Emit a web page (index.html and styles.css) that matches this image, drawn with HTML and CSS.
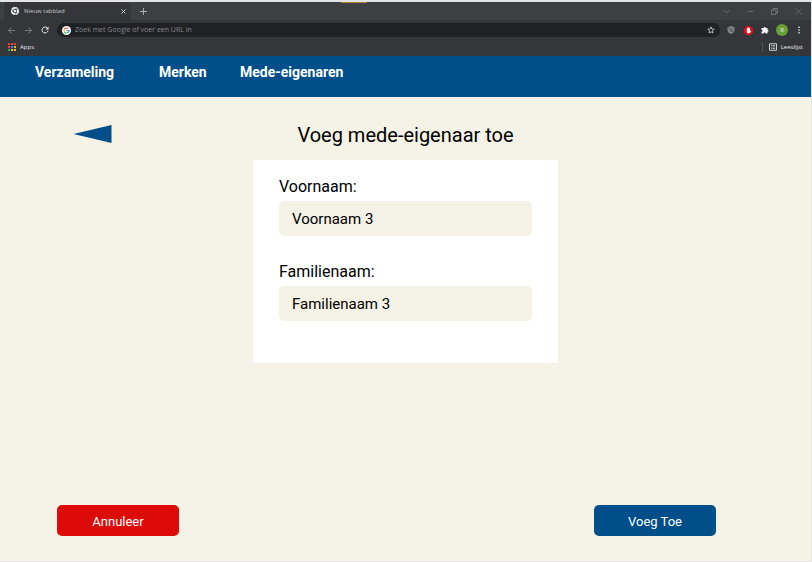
FILE: index.html
```html
<!DOCTYPE html>
<html lang="nl">
<head>
<meta charset="utf-8">
<meta name="viewport" content="width=device-width, initial-scale=1">
<title>Voeg mede-eigenaar toe</title>
<link rel="stylesheet" href="styles.css">
</head>
<body>
<div class="browser">
  <div class="tabs">
    <div class="tab">
      <svg class="tab-icon" viewBox="0 0 16 16" aria-hidden="true"><circle cx="8" cy="8" r="8" fill="#e8eaed"/><circle cx="8" cy="8" r="4.2" fill="#35363a"/><circle cx="8" cy="8" r="2.6" fill="#e8eaed"/><path d="M8 4h7M4.500 10 1.200 4.500M11.500 10 8 15.500" stroke="#35363a" stroke-width="1.300"/></svg>
      <span class="tab-title">Nieuw tabblad</span>
      <button class="icon-button" aria-label="Tabblad sluiten"><svg class="glyph-small" viewBox="0 0 10 10"><path d="M1 1l8 8M9 1L1 9" stroke="#dfe1e5" stroke-width="1.800"/></svg></button>
    </div>
    <button class="icon-button new-tab" aria-label="Nieuw tabblad openen"><svg class="glyph" viewBox="0 0 14 14"><path d="M7 0v14M0 7h14" stroke="#b4b7ba" stroke-width="1.800"/></svg></button>
    <div class="window-controls">
      <button class="icon-button" aria-label="Tabbladen zoeken"><svg class="glyph" viewBox="0 0 12 12"><path d="M1 3.500l5 5 5-5" fill="none" stroke="#74777a" stroke-width="1.300"/></svg></button>
      <button class="icon-button" aria-label="Minimaliseren"><svg class="glyph" viewBox="0 0 12 12"><path d="M1 6h10" stroke="#74777a" stroke-width="1.300"/></svg></button>
      <button class="icon-button" aria-label="Verkleinen"><svg class="glyph" viewBox="0 0 12 12"><path d="M1 3.500h7.500V11H1zM3.500 3.500V1H11v7.500H8.500" fill="none" stroke="#85888b" stroke-width="1.300"/></svg></button>
      <button class="icon-button" aria-label="Sluiten"><svg class="glyph" viewBox="0 0 12 12"><path d="M1 1l10 10M11 1L1 11" stroke="#74777a" stroke-width="1.300"/></svg></button>
    </div>
  </div>
  <div class="toolbar">
    <div class="history">
      <button class="icon-button" aria-label="Vorige"><svg class="glyph" viewBox="0 0 14 14"><path d="M14 7H1M7 1L1 7l6 6" fill="none" stroke="#8b8e91" stroke-width="1.600"/></svg></button>
      <button class="icon-button" aria-label="Volgende"><svg class="glyph" viewBox="0 0 14 14"><path d="M0 7h13M7 1l6 6-6 6" fill="none" stroke="#8b8e91" stroke-width="1.600"/></svg></button>
      <button class="icon-button" aria-label="Vernieuwen"><svg class="glyph-large" viewBox="0 0 16 16"><path d="M13 4.500A6 6 0 1 0 14 9" fill="none" stroke="#e8eaed" stroke-width="2"/><path d="M15 1v6H9z" fill="#e8eaed"/></svg></button>
    </div>
    <div class="omnibox">
      <svg class="google" viewBox="0 0 18 18" aria-hidden="true"><circle cx="9" cy="9" r="9" fill="#fff"/><path d="M12.500 5.200A5 5 0 0 0 4.700 6.500" fill="none" stroke="#ea4335" stroke-width="2.200"/><path d="M4.700 6.500a5 5 0 0 0 0 5" fill="none" stroke="#fbbc05" stroke-width="2.200"/><path d="M4.700 11.500a5 5 0 0 0 7.600 1.200" fill="none" stroke="#34a853" stroke-width="2.200"/><path d="M12.300 12.700A5 5 0 0 0 14 9H9" fill="none" stroke="#4285f4" stroke-width="2.200"/></svg>
      <input class="omnibox-input" type="text" aria-label="Adresbalk" placeholder="Zoek met Google of voer een URL in">
      <button class="icon-button" aria-label="Bladwijzer toevoegen"><svg class="glyph-large" viewBox="0 0 16 16"><path d="M8 1.800l1.800 4.300 4.700.4-3.600 3 1.100 4.600L8 11.600l-4 2.500 1.100-4.600-3.600-3 4.700-.4z" fill="none" stroke="#dfe1e5" stroke-width="1.500"/></svg></button>
    </div>
    <div class="extensions">
      <button class="icon-button" aria-label="Privacyschild"><svg class="glyph-large" viewBox="0 0 16 16"><path d="M8 0l7 2.500V8c0 4-3 6.500-7 8-4-1.500-7-4-7-8V2.500z" fill="#85888b"/><path d="M2 3l12 10M5 8.500c1 3 5 3 6 0M7 4l5 3" fill="none" stroke="#484a4e" stroke-width="1.400"/></svg></button>
      <button class="icon-button" aria-label="Advertentieblokkering"><svg class="blocker" viewBox="0 0 16 16"><path d="M4.700 0h6.600L16 4.700v6.600L11.300 16H4.700L0 11.300V4.700z" fill="#e60b12"/><path d="M5 8V4.500h1.200V3h1.500v-.800h1.500V3.500h1.300v6l1.200-1.500 1 .8-2.500 4H6.500L5 10.800z" fill="#fff"/></svg></button>
      <button class="icon-button" aria-label="Extensies"><svg class="glyph-large" viewBox="0 0 16 16"><path d="M1 4h4.500a2 2 0 1 1 4 0H13v3.500a2 2 0 1 1 0 4V15H9.500a2 2 0 0 0-4 0H1v-3.500a2 2 0 0 0 0-4z" fill="#f1f3f4"/></svg></button>
      <button class="icon-button avatar" aria-label="Profiel">R</button>
      <button class="icon-button" aria-label="Menu"><svg class="glyph-large" viewBox="0 0 16 16"><g fill="#e8eaed"><circle cx="8" cy="2.500" r="1.700"/><circle cx="8" cy="8" r="1.700"/><circle cx="8" cy="13.500" r="1.700"/></g></svg></button>
    </div>
  </div>
  <div class="bookmarks">
    <a class="bookmark" href="#"><svg class="glyph-large" viewBox="0 0 16 16" aria-hidden="true"><path d="M0 0h4v4H0zM6 0h4v4H6zM12 0h4v4h-4zM0 6h4v4H0z" fill="#ea4335"/><path d="M6 6h4v4H6z" fill="#4285f4"/><path d="M12 6h4v4h-4zM12 12h4v4h-4zM6 12h4v4H6z" fill="#fbbc05"/><path d="M0 12h4v4H0z" fill="#34a853"/></svg><span>Apps</span></a>
    <a class="bookmark reading-list" href="#"><svg class="glyph-large" viewBox="0 0 16 16" aria-hidden="true"><path d="M1 1.500h14v13H1z" fill="none" stroke="#dfe1e5" stroke-width="1.800"/><path d="M4 5h2M7.500 5H12M4 8h2M7.500 8H12M4 11h2M7.500 11H12" stroke="#dfe1e5" stroke-width="1.500"/></svg><span>Leeslijst</span></a>
  </div>
</div>
<nav class="nav" aria-label="Hoofdmenu">
  <a href="#">Verzameling</a>
  <a href="#">Merken</a>
  <a href="#">Mede-eigenaren</a>
</nav>
<main class="page">
  <header class="page-header">
    <a class="back" href="#" aria-label="Terug"><svg class="back-arrow" viewBox="0 0 38 18"><path d="M0 9L38 0v18z" fill="#004f8a"/></svg></a>
    <h1>Voeg mede-eigenaar toe</h1>
  </header>
  <form class="form">
    <div class="card">
      <div class="field">
        <label for="voornaam">Voornaam:</label>
        <input id="voornaam" type="text" value="Voornaam 3">
      </div>
      <div class="field">
        <label for="familienaam">Familienaam:</label>
        <input id="familienaam" type="text" value="Familienaam 3">
      </div>
    </div>
    <div class="actions">
      <button class="button cancel" type="button">Annuleer</button>
      <button class="button submit" type="submit">Voeg Toe</button>
    </div>
  </form>
</main>
</body>
</html>
```
FILE: styles.css
```css
* {
  box-sizing: border-box;
}

body {
  display: flex;
  flex-direction: column;
  min-height: 100vh;
  margin: 0;
  border: solid #e4e4e4;
  border-width: 2px 1px 1px 0;
  background: #f5f3e6;
  color: #000;
  font-family: Roboto, "Liberation Sans", sans-serif;
}

a {
  color: inherit;
  text-decoration: none;
}

button,
input {
  border: 0;
  font: inherit;
}

svg {
  display: block;
}

.browser {
  position: relative;
  background: #35363a;
  color: #e8eaed;
  font-family: "Open Sans", "Noto Sans", sans-serif;
  font-size: 6px;
  line-height: 10px;
}

/* Accent mark over the top edge of the window */
.browser::before {
  content: "";
  position: absolute;
  top: 0;
  left: 42%;
  width: 26px;
  height: 1px;
  background: #a88432;
}

.icon-button {
  display: flex;
  align-items: center;
  justify-content: center;
  width: 10px;
  height: 10px;
  padding: 0;
  background: none;
  color: inherit;
}

.glyph-small {
  width: 5px;
  height: 5px;
}

.glyph {
  width: 7px;
  height: 7px;
}

.glyph-large {
  width: 8px;
  height: 8px;
}

.blocker {
  width: 9px;
  height: 9px;
}

.tabs {
  display: flex;
  align-items: center;
  height: 18px;
  padding-left: 4px;
  background: #3c4043;
}

.tab {
  display: flex;
  align-items: center;
  gap: 5px;
  width: 127px;
  height: 18px;
  padding: 0 3px 0 7px;
  border-radius: 4px 4px 0 0;
  background: #35363a;
}

.tab-icon {
  width: 8px;
  height: 8px;
}

.tab-title {
  flex: 1;
  color: #c4c7ca;
}

.new-tab {
  margin-left: 7px;
}

.window-controls {
  display: flex;
  gap: 14px;
  margin-left: auto;
  padding-right: 8px;
}

.toolbar {
  display: flex;
  align-items: center;
  gap: 5px;
  height: 20px;
  padding: 0 6px;
}

.history {
  display: flex;
  gap: 7px;
  padding-right: 2px;
}

.omnibox {
  display: flex;
  flex: 1;
  align-items: center;
  gap: 4px;
  height: 14px;
  padding: 0 4px 0 5px;
  border-radius: 7px;
  background: #202124;
}

.google {
  width: 9px;
  height: 9px;
}

.omnibox-input {
  flex: 1;
  min-width: 0;
  padding: 0;
  background: none;
  color: #e8eaed;
  font-size: 7px;
}

.omnibox-input::placeholder {
  color: #85888b;
  opacity: 1;
}

.extensions {
  display: flex;
  align-items: center;
  gap: 5px;
}

.extensions .icon-button {
  width: 12px;
  height: 12px;
}

.avatar {
  border-radius: 50%;
  background: #689f38;
}

.bookmarks {
  display: flex;
  align-items: center;
  justify-content: space-between;
  height: 16px;
  padding: 0 8px 2px;
}

.bookmark {
  display: flex;
  align-items: center;
  gap: 4px;
}

.reading-list {
  padding-left: 6px;
  border-left: 1px solid #505256;
}

.nav {
  display: grid;
  grid-template-columns: 124px 81px auto;
  height: 41px;
  padding: 7px 35px;
  background: #004f8a;
  color: #fff;
  font-size: 14px;
  font-weight: 700;
  line-height: 18px;
}

.page {
  display: flex;
  flex: 1;
  flex-direction: column;
}

.page-header {
  display: grid;
  grid-template-columns: 1fr auto 1fr;
  padding: 26px 0 13px;
}

.back {
  justify-self: start;
  margin: 2px 0 0 73px;
}

.back-arrow {
  width: 39px;
  height: 18px;
}

h1 {
  margin: 0;
  font-size: 20px;
  font-weight: 400;
  line-height: 24px;
}

.form {
  display: flex;
  flex: 1;
  flex-direction: column;
  justify-content: space-between;
}

.card {
  display: flex;
  flex-direction: column;
  gap: 25px;
  width: 305px;
  margin: 0 auto;
  padding: 17px 26px 42px;
  background: #fff;
}

.field {
  display: flex;
  flex-direction: column;
  gap: 4px;
  font-size: 16px;
  line-height: 20px;
}

.field + .field {
  padding-top: 1px;
}

.field input {
  width: 100%;
  height: 35px;
  padding: 0 13px;
  border-radius: 5px;
  background: #f5f3e6;
  color: #000;
  font-size: 15px;
}

.actions {
  display: flex;
  justify-content: space-between;
  padding: 24px 95px 25px 57px;
}

.button {
  width: 122px;
  height: 31px;
  padding: 1px 0 0;
  border-radius: 5px;
  color: #fff;
  font-size: 13px;
}

.cancel {
  background: #dd0a0a;
}

.submit {
  background: #004f8a;
}
```
